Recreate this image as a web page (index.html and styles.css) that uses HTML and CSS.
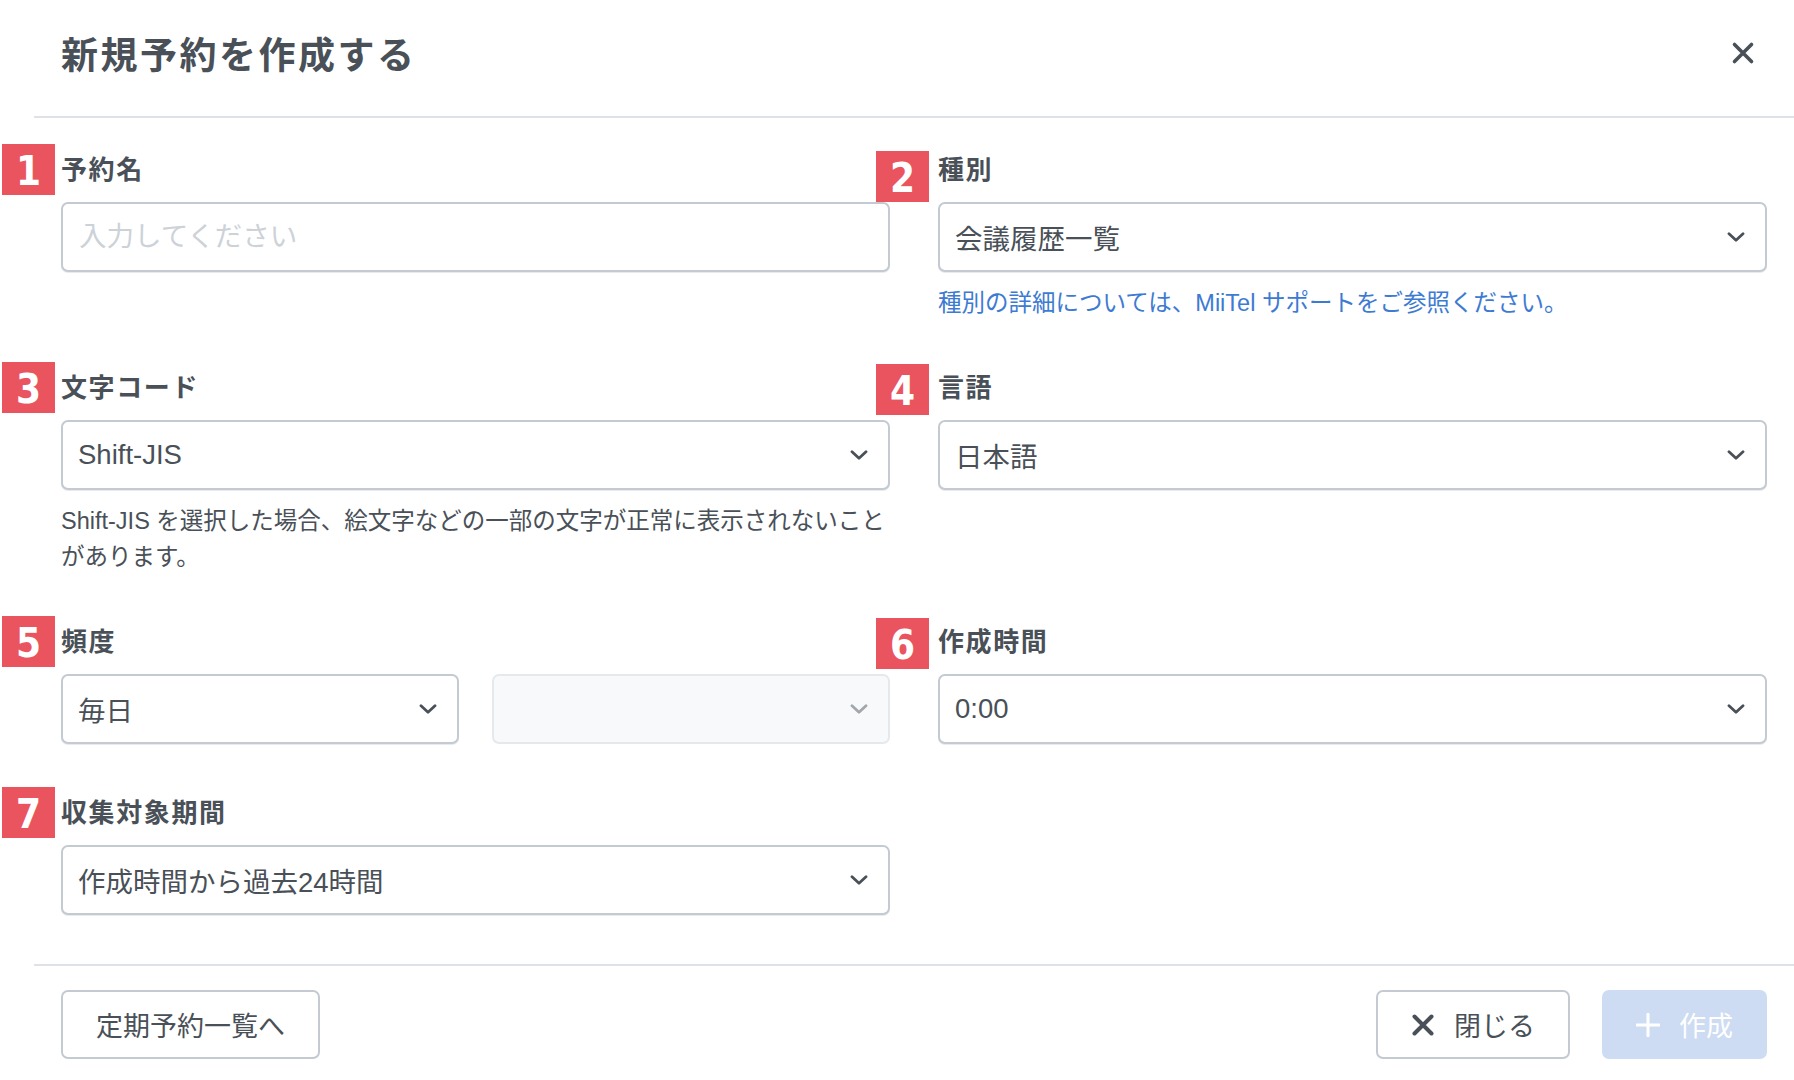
FILE: index.html
```html
<!DOCTYPE html>
<html lang="ja">
<head>
    <meta charset="UTF-8">
    <title>新規予約を作成する</title>
    <link rel="stylesheet" href="styles.css">
</head>
<body>
    <div class="modal">
        <header class="modal-header">
            <h1 class="modal-title">新規予約を作成する</h1>
            <button class="btn-close" type="button" aria-label="閉じる">
                <svg width="24" height="24" viewBox="0 0 24 24"><path d="M3.5 3.5 L20.5 20.5 M20.5 3.5 L3.5 20.5" /></svg>
            </button>
        </header>

        <div class="modal-body">
            <div class="form-grid">
                <div class="form-group">
                    <span class="step-badge">1</span>
                    <label class="form-label" for="reserveName">予約名</label>
                    <input class="form-input" id="reserveName" type="text" placeholder="入力してください">
                </div>

                <div class="form-group form-group--right">
                    <span class="step-badge step-badge--low">2</span>
                    <label class="form-label">種別</label>
                    <div class="select-box">
                        <span>会議履歴一覧</span>
                        <svg class="chevron" width="18" height="10" viewBox="0 0 18 10"><path d="M2 1.8 L9 8.2 L16 1.8" /></svg>
                    </div>
                    <p class="form-help form-help--link">種別の詳細については、MiiTel サポートをご参照ください。</p>
                </div>

                <div class="form-group">
                    <span class="step-badge">3</span>
                    <label class="form-label">文字コード</label>
                    <div class="select-box">
                        <span>Shift-JIS</span>
                        <svg class="chevron" width="18" height="10" viewBox="0 0 18 10"><path d="M2 1.8 L9 8.2 L16 1.8" /></svg>
                    </div>
                    <p class="form-help">Shift-JIS を選択した場合、絵文字などの一部の文字が正常に表示されないことがあります。</p>
                </div>

                <div class="form-group form-group--right">
                    <span class="step-badge">4</span>
                    <label class="form-label">言語</label>
                    <div class="select-box">
                        <span>日本語</span>
                        <svg class="chevron" width="18" height="10" viewBox="0 0 18 10"><path d="M2 1.8 L9 8.2 L16 1.8" /></svg>
                    </div>
                </div>

                <div class="form-group">
                    <span class="step-badge">5</span>
                    <label class="form-label">頻度</label>
                    <div class="select-pair">
                        <div class="select-box">
                            <span>毎日</span>
                            <svg class="chevron" width="18" height="10" viewBox="0 0 18 10"><path d="M2 1.8 L9 8.2 L16 1.8" /></svg>
                        </div>
                        <div class="select-box is-disabled">
                            <span></span>
                            <svg class="chevron" width="18" height="10" viewBox="0 0 18 10"><path d="M2 1.8 L9 8.2 L16 1.8" /></svg>
                        </div>
                    </div>
                </div>

                <div class="form-group form-group--right">
                    <span class="step-badge">6</span>
                    <label class="form-label">作成時間</label>
                    <div class="select-box">
                        <span>0:00</span>
                        <svg class="chevron" width="18" height="10" viewBox="0 0 18 10"><path d="M2 1.8 L9 8.2 L16 1.8" /></svg>
                    </div>
                </div>

                <div class="form-group">
                    <span class="step-badge">7</span>
                    <label class="form-label">収集対象期間</label>
                    <div class="select-box">
                        <span>作成時間から過去24時間</span>
                        <svg class="chevron" width="18" height="10" viewBox="0 0 18 10"><path d="M2 1.8 L9 8.2 L16 1.8" /></svg>
                    </div>
                </div>
            </div>
        </div>

        <footer class="modal-footer">
            <button class="btn btn-outline" type="button">定期予約一覧へ</button>
            <div class="footer-actions">
                <button class="btn btn-outline" type="button">
                    <svg class="btn-icon icon-x" width="24" height="24" viewBox="0 0 24 24"><path d="M3.5 3.5 L20.5 20.5 M20.5 3.5 L3.5 20.5" /></svg>
                    閉じる
                </button>
                <button class="btn btn-primary" type="button" disabled>
                    <svg class="btn-icon icon-plus" width="24" height="24" viewBox="0 0 24 24"><path d="M12 1 L12 23 M1 12 L23 12" /></svg>
                    作成
                </button>
            </div>
        </footer>
    </div>
</body>
</html>
```
FILE: styles.css
```css
body {
    margin: 0;
    background: #fff;
    font-family: 'Liberation Sans', 'Noto Sans CJK JP', sans-serif;
    color: #495057;
    overflow: hidden;
}

.modal {
    margin-left: 34px;
    width: 1760px;
}

/* header */
.modal-header {
    box-sizing: border-box;
    height: 118px;
    padding: 0 27px 10px;
    border-bottom: 2px solid #dee2e6;
    display: flex;
    align-items: center;
    justify-content: space-between;
}

.modal-title {
    margin: 0;
    font-family: 'Noto Sans CJK JP', sans-serif;
    font-size: 37px;
    font-weight: 700;
    letter-spacing: 2.5px;
    color: #495057;
}

.btn-close {
    background: none;
    border: none;
    padding: 0;
    margin-right: 12px;
    width: 24px;
    height: 24px;
    cursor: pointer;
}

.btn-close svg path {
    stroke: #495057;
    stroke-width: 3.6;
    stroke-linecap: round;
    fill: none;
}

/* body */
.modal-body {
    padding: 32px 27px 49px;
}

.form-grid {
    display: grid;
    grid-template-columns: 1fr 1fr;
    column-gap: 48px;
    row-gap: 49px;
    align-items: start;
}

.form-group {
    position: relative;
    display: flex;
    flex-direction: column;
}

.form-label {
    font-family: 'Noto Sans CJK JP', sans-serif;
    font-size: 26px;
    font-weight: 700;
    line-height: 36px;
    letter-spacing: 1.6px;
    margin-bottom: 16px;
}

/* numbered markers beside each field */
.step-badge {
    position: absolute;
    left: -59px;
    top: -6px;
    width: 53px;
    height: 51px;
    background: #e9545f;
    color: #fff;
    font-family: 'Liberation Sans Narrow', 'DejaVu Sans Condensed', sans-serif;
    font-weight: 700;
    font-size: 40px;
    line-height: 55px;
    text-align: center;
}

.form-group--right .step-badge {
    left: -62px;
    top: -4px;
}

.form-group--right .step-badge--low {
    top: 1px;
}

.form-input,
.select-box {
    box-sizing: border-box;
    height: 70px;
    width: 100%;
    border: 2px solid #c4cad1;
    border-radius: 7px;
    box-shadow: 0 1px 0 rgba(73, 80, 87, 0.12);
    background: #fff;
    font-family: 'Liberation Sans', 'Noto Sans CJK JP', sans-serif;
    font-size: 27.5px;
    color: #495057;
}

.form-input {
    padding: 0 16px;
    outline: none;
}

.form-input::placeholder {
    color: #ccd2d8;
}

.select-box {
    display: flex;
    align-items: center;
    justify-content: space-between;
    padding: 0 20px 0 15px;
}

.chevron path {
    fill: none;
    stroke: #495057;
    stroke-width: 2.8;
    stroke-linecap: round;
    stroke-linejoin: round;
}

.select-box.is-disabled {
    background: #f8f9fa;
    border-color: #e6e9ec;
    box-shadow: none;
}

.select-box.is-disabled .chevron path {
    stroke: #a2a7ac;
}

.select-pair {
    display: grid;
    grid-template-columns: 1fr 1fr;
    gap: 33px;
}

.form-help {
    margin: 13px 0 -2px;
    font-size: 23.5px;
    line-height: 36px;
    color: #495057;
}

.form-help--link {
    color: #3d7bd2;
}

/* footer */
.modal-footer {
    border-top: 2px solid #dee2e6;
    padding: 24px 27px 20px;
    display: flex;
    justify-content: space-between;
    align-items: center;
}

.footer-actions {
    display: flex;
    gap: 32px;
}

.btn {
    box-sizing: border-box;
    height: 69px;
    padding: 0 33px;
    border-radius: 7px;
    font-family: 'Liberation Sans', 'Noto Sans CJK JP', sans-serif;
    font-size: 27px;
    display: flex;
    align-items: center;
    gap: 19px;
    cursor: pointer;
}

.btn-outline {
    background: #fff;
    border: 2px solid #c4cad1;
    color: #495057;
}

.btn-primary {
    background: #cddcf2;
    border: none;
    color: #fff;
    padding: 0 34px;
}

.btn-icon path {
    fill: none;
    stroke-linecap: round;
}

.icon-x path {
    stroke: #495057;
    stroke-width: 4;
}

.icon-plus path {
    stroke: #fff;
    stroke-width: 3;
}
```
